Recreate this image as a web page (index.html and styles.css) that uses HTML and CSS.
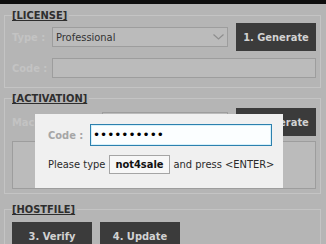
FILE: index.html
```html
<!DOCTYPE html>
<html lang="en">
<head>
    <meta charset="UTF-8">
    <meta name="viewport" content="width=device-width, initial-scale=1.0">
    <title>License Tool</title>
    <link rel="stylesheet" href="styles.css">
</head>
<body>
    <div class="titlebar"></div>
    <div class="app">
        <fieldset class="group license">
            <legend>[LICENSE]</legend>
            <div class="row btn-row">
                <label class="lbl">Type :</label>
                <div class="select">
                    <span>Professional</span>
                    <svg width="11" height="6" viewBox="0 0 11 6"><path d="M0.5 0.5 L5.5 5 L10.5 0.5" fill="none" stroke="#8e8e8e" stroke-width="1.2"/></svg>
                </div>
                <button class="btn">1. Generate</button>
            </div>
            <div class="row field-row">
                <label class="lbl">Code :</label>
                <div class="field"></div>
            </div>
        </fieldset>

        <fieldset class="group activation">
            <legend>[ACTIVATION]</legend>
            <div class="row btn-row">
                <label class="lbl wide">Machine ID :</label>
                <div class="field"></div>
                <button class="btn">2. Generate</button>
            </div>
            <div class="textarea"></div>
        </fieldset>

        <fieldset class="group hostfile">
            <legend>[HOSTFILE]</legend>
            <div class="row">
                <button class="btn">3. Verify</button>
                <button class="btn">4. Update</button>
            </div>
        </fieldset>
    </div>

    <div class="dialog">
        <div class="dialog-row">
            <label class="dlg-lbl">Code :</label>
            <input class="pw" type="password" value="0000000000" readonly>
        </div>
        <div class="dialog-row hint">
            <span>Please type</span>
            <span class="key">not4sale</span>
            <span>and press &lt;ENTER&gt;</span>
        </div>
    </div>
</body>
</html>
```

FILE: styles.css
```css
body {
    margin: 0;
    width: 326px;
    height: 244px;
    overflow: hidden;
    position: relative;
    background-color: #b5b5b5;
    font-family: "DejaVu Sans Condensed", "Liberation Sans", sans-serif;
    font-size: 11px;
    color: #333;
}

.titlebar {
    height: 4px;
    background-color: #0e0e0e;
}

.app {
    padding: 0 5px 0 4px;
}

.group {
    margin: 0;
    border: 1px solid #c4c4c4;
    padding: 0 4px 9px 7px;
}

.group legend {
    padding: 0 2px 0 0;
    font-weight: bold;
    line-height: 13px;
    text-decoration: underline;
    color: #2e2e2e;
}

.license {
    margin-top: 5px;
}

.activation {
    margin-top: 4px;
    padding-bottom: 4px;
}

.hostfile {
    margin-top: 9px;
}

.row {
    display: flex;
    align-items: center;
    gap: 8px;
}

.license .btn-row {
    margin-top: 1px;
}

.activation .btn-row {
    margin-top: 3px;
}

.hostfile .row {
    margin-top: 6px;
}

.field-row {
    margin-top: 7px;
}

.lbl {
    flex-shrink: 0;
    width: 32px;
    white-space: nowrap;
    font-weight: bold;
    color: #c3c3c3;
}

.lbl.wide {
    width: 82px;
}

.select, .field {
    flex: 1;
    height: 18px;
    border: 1px solid #9d9d9d;
    background-color: #bbbbbb;
}

.select {
    display: flex;
    align-items: center;
    justify-content: space-between;
    padding: 0 2px 0 3px;
}

.select svg {
    margin-right: 1px;
}

.btn {
    flex-shrink: 0;
    width: 80px;
    height: 28px;
    border: none;
    padding: 0;
    background-color: #3b3b3b;
    color: #d2d2d2;
    font-family: inherit;
    font-size: 11px;
    font-weight: bold;
    white-space: nowrap;
}

.textarea {
    margin-top: 5px;
    height: 46px;
    border: 1px solid #9d9d9d;
    background-color: #bbbbbb;
}

/* modal over the dimmed form */
.dialog {
    position: absolute;
    left: 35px;
    top: 114px;
    width: 248px;
    height: 74px;
    box-sizing: border-box;
    padding: 10px 11px 0 13px;
    background-color: #f0f0f0;
}

.dialog-row {
    display: flex;
    align-items: center;
    white-space: nowrap;
}

.dlg-lbl {
    flex-shrink: 0;
    width: 42px;
    font-weight: bold;
    color: #a6a6a6;
}

.pw {
    width: 182px;
    height: 22px;
    box-sizing: border-box;
    margin: 0;
    padding: 0 2px;
    border: 1px solid #2c80ae;
    background-color: #fbfeff;
    box-shadow: inset 0 0 0 1px #d6f1fb;
    font-family: "DejaVu Sans", sans-serif;
    font-size: 12px;
    color: #000;
    outline: none;
}

.hint {
    margin-top: 9px;
    gap: 4px;
    color: #2a2a2a;
}

.key {
    height: 17px;
    line-height: 17px;
    padding: 0 5px;
    border: 1px solid #a5a5a5;
    background-color: #f7f7f7;
    font-weight: bold;
    color: #111;
}
```
